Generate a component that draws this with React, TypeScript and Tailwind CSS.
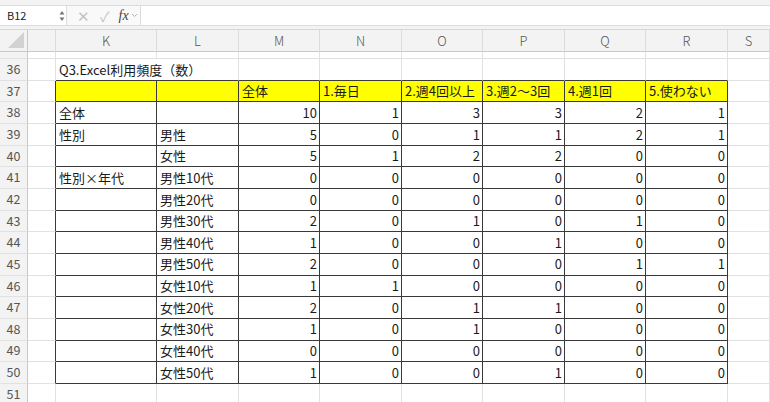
import type { ReactNode } from "react";

type Row = {
  num: number;
  k?: string;
  l?: string;
  values?: (number | string)[];
};

const COLS = ["", "", "K", "L", "M", "N", "O", "P", "Q", "R", "S"];
const GRID =
  "grid grid-cols-[28px_28px_101px_82px_81px_82px_81px_82px_81px_82px_1fr]";

const HEADERS = ["全体", "1.毎日", "2.週4回以上", "3.週2〜3回", "4.週1回", "5.使わない"];

const DATA: Row[] = [
  { num: 38, k: "全体", values: [10, 1, 3, 3, 2, 1] },
  { num: 39, k: "性別", l: "男性", values: [5, 0, 1, 1, 2, 1] },
  { num: 40, l: "女性", values: [5, 1, 2, 2, 0, 0] },
  { num: 41, k: "性別×年代", l: "男性10代", values: [0, 0, 0, 0, 0, 0] },
  { num: 42, l: "男性20代", values: [0, 0, 0, 0, 0, 0] },
  { num: 43, l: "男性30代", values: [2, 0, 1, 0, 1, 0] },
  { num: 44, l: "男性40代", values: [1, 0, 0, 1, 0, 0] },
  { num: 45, l: "男性50代", values: [2, 0, 0, 0, 1, 1] },
  { num: 46, l: "女性10代", values: [1, 1, 0, 0, 0, 0] },
  { num: 47, l: "女性20代", values: [2, 0, 1, 1, 0, 0] },
  { num: 48, l: "女性30代", values: [1, 0, 1, 0, 0, 0] },
  { num: 49, l: "女性40代", values: [0, 0, 0, 0, 0, 0] },
  { num: 50, l: "女性50代", values: [1, 0, 0, 1, 0, 0] },
];

// table occupies columns 2..9 (K..R), rows 37..50
function inTable(row: number, col: number): boolean {
  return row >= 37 && row <= 50 && col >= 2 && col <= 9;
}

function Cell({
  row,
  col,
  children,
  align = "left",
  yellow = false,
}: {
  row: number;
  col: number;
  children?: ReactNode;
  align?: "left" | "right";
  yellow?: boolean;
}) {
  const darkRight = inTable(row, col) || inTable(row, col + 1);
  const darkBottom = inTable(row, col) || inTable(row + 1, col);
  return (
    <div
      className={[
        "flex items-center overflow-hidden whitespace-nowrap border-r border-b text-[13px] text-[#1a1a1a]",
        darkRight ? "border-r-[#3a3a3a]" : "border-r-[#e1e1e1]",
        darkBottom ? "border-b-[#3a3a3a]" : "border-b-[#e1e1e1]",
        align === "right" ? "justify-end pr-[2px]" : "pl-[3px]",
        yellow ? "bg-[#ffff00]" : "",
      ].join(" ")}
    >
      {children}
    </div>
  );
}

function RowHead({ num }: { num: number }) {
  return (
    <div className="flex items-center justify-center border-r border-b border-r-[#c8c8c8] border-b-[#e1e1e1] bg-[#f3f3f3] text-[12.5px] text-[#555]">
      {num}
    </div>
  );
}

function FormulaBar() {
  return (
    <div className="h-[29px] bg-[#f3f3f3] pt-[5px]">
      <div className="flex h-[21px] border-t border-b border-[#dcdcdc] bg-white">
        <div className="flex w-[58px] items-center pl-[7px] text-[11px] text-[#222]">
          B12
        </div>
        <div className="flex w-[8px] items-center justify-center">
          <svg width="6" height="12" viewBox="0 0 6 12">
            <path d="M3 1 L5.5 4.5 L0.5 4.5 Z" fill="#777" />
            <path d="M3 11 L5.5 7.5 L0.5 7.5 Z" fill="#777" />
          </svg>
        </div>
        <div className="flex w-[74px] items-center border-l border-[#dcdcdc] bg-[#f9f9f9]">
          <span className="ml-[10px] text-[15px] leading-none text-[#c4c4c4]">✕</span>
          <span className="ml-[10px] text-[14px] leading-none text-[#c4c4c4]">✓</span>
          <span className="ml-[9px] font-['Liberation_Serif',serif] text-[14px] italic leading-none text-[#444]">
            fx
          </span>
          <svg className="ml-[2px]" width="7" height="5" viewBox="0 0 7 5">
            <path d="M1 1 L3.5 3.5 L6 1" fill="none" stroke="#b5b5b5" strokeWidth="1" />
          </svg>
        </div>
        <div className="flex-1 border-l border-[#dcdcdc] bg-white" />
      </div>
    </div>
  );
}

function ColumnHeader() {
  return (
    <div className={`${GRID} h-[23px] border-t border-[#d6d6d6] bg-[#f3f3f3]`}>
      {COLS.map((c, i) =>
        i === 0 ? (
          <div key={i} className="relative border-r border-b border-[#c8c8c8]">
            <svg className="absolute bottom-[3px] right-[3px]" width="16" height="16" viewBox="0 0 16 16">
              <path d="M16 0 L16 16 L0 16 Z" fill="#d2d2d2" />
            </svg>
          </div>
        ) : (
          <div
            key={i}
            className="flex items-center justify-center border-r border-b border-r-[#dcdcdc] border-b-[#c8c8c8] text-[13px] font-light text-[#555]"
          >
            {c}
          </div>
        ),
      )}
    </div>
  );
}

export default function App() {
  return (
    <div className="h-[402px] w-[770px] overflow-hidden bg-white font-['Noto_Sans_CJK_JP','Noto_Sans',sans-serif]">
      <FormulaBar />
      <ColumnHeader />

      {/* row 35, scrolled almost out of view */}
      <div className={`${GRID} h-[7px]`}>
        <div className="overflow-hidden border-r border-b border-r-[#c8c8c8] border-b-[#e1e1e1] bg-[#f3f3f3]">
          <div className="-mt-[15px] flex h-[21px] items-center justify-center text-[12.5px] text-[#555]">
            35
          </div>
        </div>
        {COLS.slice(1).map((_, i) => (
          <div key={i} className="border-r border-b border-[#e1e1e1]" />
        ))}
      </div>

      {/* row 36: title */}
      <div className={`${GRID} h-[21.67px]`}>
        <RowHead num={36} />
        <Cell row={36} col={1} />
        <div className="col-span-2 flex items-center whitespace-nowrap border-r border-b border-r-[#e1e1e1] border-b-[#3a3a3a] pl-[3px] text-[13px] text-[#1a1a1a]">
          Q3.Excel利用頻度（数）
        </div>
        {[4, 5, 6, 7, 8, 9, 10].map((c) => (
          <Cell key={c} row={36} col={c} />
        ))}
      </div>

      {/* row 37: yellow header */}
      <div className={`${GRID} h-[21.67px]`}>
        <RowHead num={37} />
        <Cell row={37} col={1} />
        <Cell row={37} col={2} yellow />
        <Cell row={37} col={3} yellow />
        {HEADERS.map((h, i) => (
          <Cell key={h} row={37} col={4 + i} yellow>
            {h}
          </Cell>
        ))}
        <Cell row={37} col={10} />
      </div>

      {DATA.map((r) => (
        <div key={r.num} className={`${GRID} h-[21.67px]`}>
          <RowHead num={r.num} />
          <Cell row={r.num} col={1} />
          <Cell row={r.num} col={2}>{r.k}</Cell>
          <Cell row={r.num} col={3}>{r.l}</Cell>
          {r.values?.map((v, i) => (
            <Cell key={i} row={r.num} col={4 + i} align="right">
              {v}
            </Cell>
          ))}
          <Cell row={r.num} col={10} />
        </div>
      ))}

      <div className={`${GRID} h-[21.67px]`}>
        <RowHead num={51} />
        {COLS.slice(1).map((_, i) => (
          <Cell key={i} row={51} col={i + 1} />
        ))}
      </div>
    </div>
  );
}
